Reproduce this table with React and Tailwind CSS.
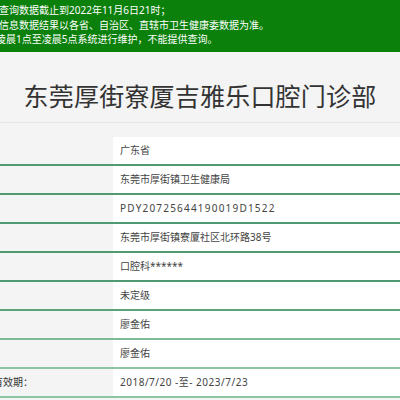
const rows = [
  { label: "", value: "广东省", line: "border-[#4f9a70]", track: "" },
  { label: "", value: "东莞市厚街镇卫生健康局", line: "border-[#4f9a70]", track: "" },
  { label: "", value: "PDY20725644190019D1522", line: "border-[#4f9a70]", track: "tracking-[1.2px]" },
  { label: "", value: "东莞市厚街镇寮厦社区北环路38号", line: "border-[#4f9a70]", track: "" },
  { label: "", value: "口腔科******", line: "border-[#4f9a70]", track: "" },
  { label: "", value: "未定级", line: "border-[#5aa47c]", track: "" },
  { label: "", value: "廖金佑", line: "border-[#7fbb9a]", track: "" },
  { label: "", value: "廖金佑", line: "border-[#8cc4a6]", track: "" },
  { label: "有效期：", value: "2018/7/20 -至- 2023/7/23", line: "border-[#8cc4a6]", track: "tracking-[0.5px]" },
];

export default function App() {
  return (
    <div className="w-[400px] h-[400px] overflow-hidden bg-[#f4f4f4] text-[#333] font-[family-name:'Noto_Sans','Noto_Sans_CJK_SC',sans-serif]">
      <div className="h-[52px] bg-[#0b800b] text-white text-[10px] leading-[14.5px] pt-[3px] -ml-[1px]">
        <p>查询数据截止到2022年11月6日21时；</p>
        <p>信息数据结果以各省、自治区、直辖市卫生健康委数据为准。</p>
        <p className="-ml-[3px]">凌晨1点至凌晨5点系统进行维护，不能提供查询。</p>
      </div>

      <div className="h-[71px] border-b border-[#e6e6e6] flex items-center justify-center pt-[19px]">
        <h1 className="text-[25px] leading-none text-[#333] tracking-[0.2px]">东莞厚街寮厦吉雅乐口腔门诊部</h1>
      </div>

      <div className="mt-[14px]">
        {rows.map((r, i) => (
          <div key={i} className={`flex h-[29px] border-b-2 ${r.line}`}>
            <div className="w-[113px] bg-[#f4f4f4] text-[10px] flex items-center">
              <span className="-ml-[7px]">{r.label}</span>
            </div>
            <div className={`flex-1 bg-white text-[10px] flex items-center pl-[7px] text-[#444] ${r.track}`}>
              {r.value}
            </div>
          </div>
        ))}
      </div>
    </div>
  );
}
